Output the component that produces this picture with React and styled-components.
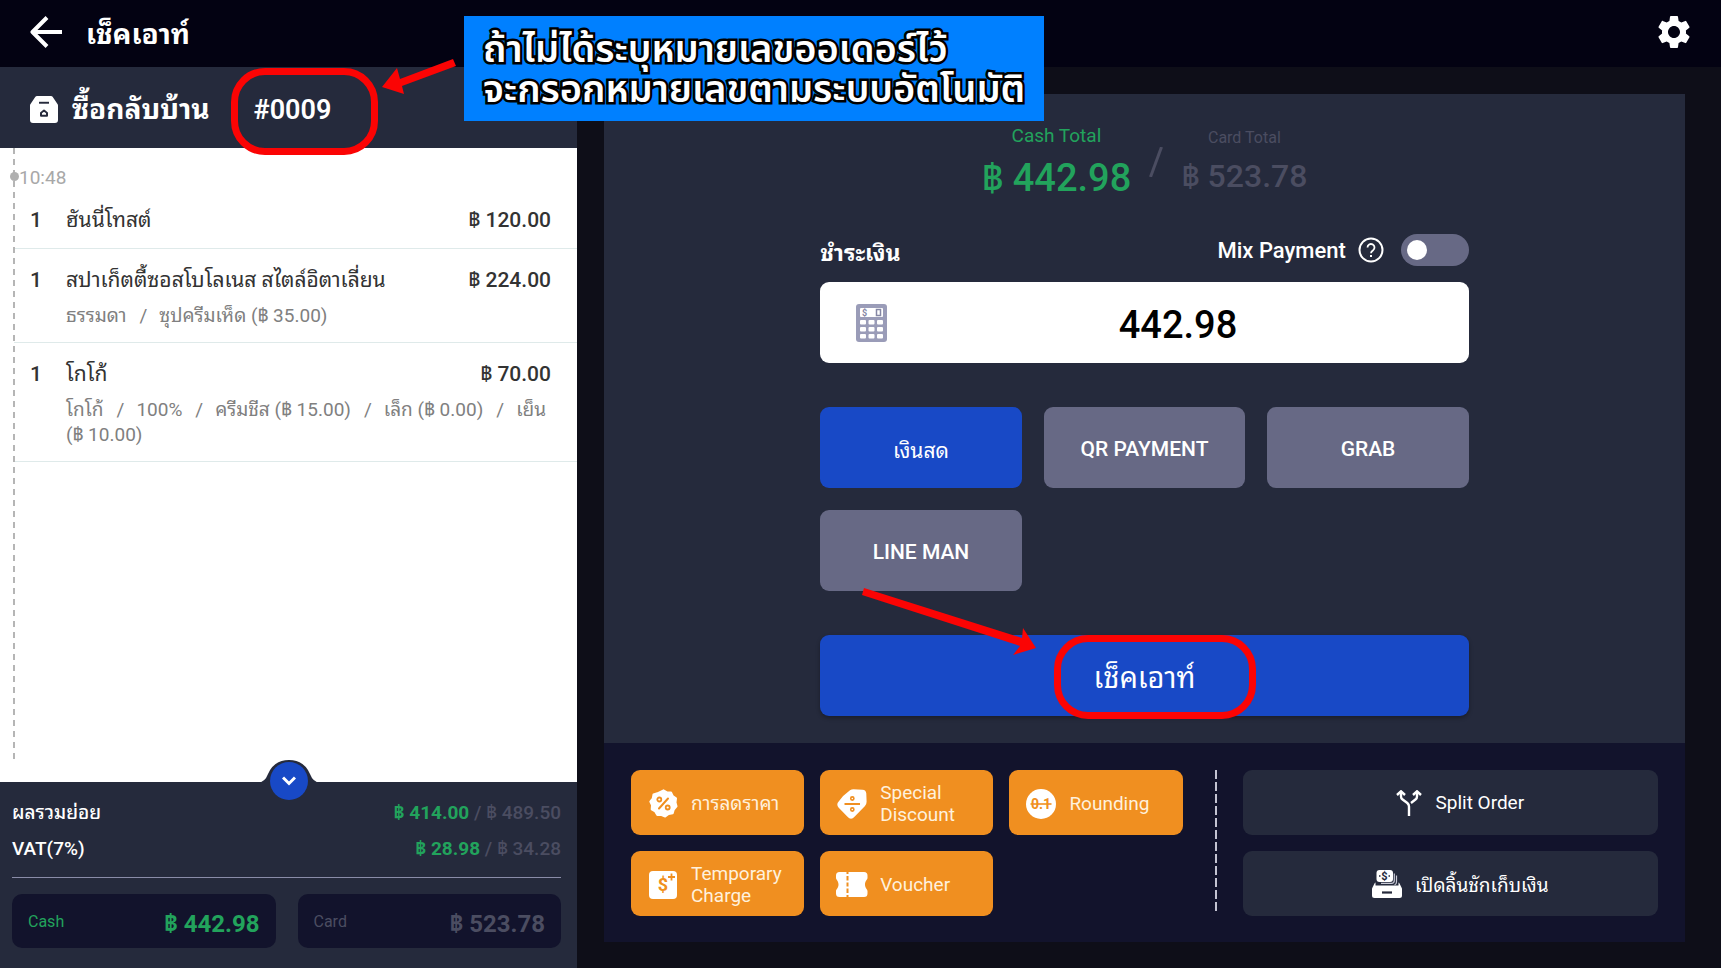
import React, { useState } from 'react';
import styled, { ThemeProvider, createGlobalStyle, css } from 'styled-components';
import { MdSettings } from 'react-icons/md';

const theme = {
  header: '#030212',
  page: '#0e0e18',
  panel: '#252a3c',
  deep: '#12132c',
  blue: '#1849c6',
  grey: '#676985',
  orange: '#f08f20',
  green: '#22a35c',
  muted: '#4b4d61',
  cream: '#fff1dd',
  red: '#fb0404',
};

const GlobalStyle = createGlobalStyle`
  * {
    box-sizing: border-box;
  }

  body {
    margin: 0;
    background: ${(props) => props.theme.page};
    color: #fff;
    font-family: Roboto, 'Noto Sans Thai Looped', 'Droid Sans Thai', Loma, Garuda, Waree, 'Noto Sans Thai', 'Noto Sans', sans-serif;
  }

  button, input {
    font-family: inherit;
  }
`;

const orderItems = [
  { qty: 1, name: 'ฮันนี่โทสต์', price: '฿ 120.00', options: [] },
  {
    qty: 1,
    name: 'สปาเก็ตตี้ซอสโบโลเนส สไตล์อิตาเลี่ยน',
    price: '฿ 224.00',
    options: [{ name: 'ธรรมดา' }, { name: 'ซุปครีมเห็ด', price: '฿ 35.00' }],
  },
  {
    qty: 1,
    name: 'โกโก้',
    price: '฿ 70.00',
    options: [
      { name: 'โกโก้' },
      { name: '100%' },
      { name: 'ครีมชีส', price: '฿ 15.00' },
      { name: 'เล็ก', price: '฿ 0.00' },
      { name: 'เย็น', price: '฿ 10.00' },
    ],
  },
];

const methods = ['เงินสด', 'QR PAYMENT', 'GRAB', 'LINE MAN'];

const BackIcon = () => (
  <svg width="32" height="32" viewBox="0 0 32 32" fill="none" stroke="currentColor" strokeWidth="4">
    <path d="M32 16H3M17 1.500L2.500 16L17 30.500" strokeLinejoin="round" />
  </svg>
);

const TakeawayIcon = () => (
  <svg width="28" height="27" viewBox="0 0 28 28" preserveAspectRatio="none">
    <path fill="#fff" d="M7 0h14a2 2 0 0 1 1.600.8L27.300 8a3 3 0 0 1 .7 2v15a3 3 0 0 1-3 3H3a3 3 0 0 1-3-3V10a3 3 0 0 1 .7-2L5.400.8A2 2 0 0 1 7 0z" />
    <path stroke="#262a3b" strokeWidth="2" d="M9 7h10" />
    <path stroke="#262a3b" strokeWidth="2" fill="none" strokeLinejoin="round" d="M11 20.500v-3l3-2.500 3 2.500v3z" />
  </svg>
);

const HelpIcon = () => (
  <svg width="26" height="26" viewBox="0 0 26 26" fill="none" stroke="currentColor" strokeWidth="2">
    <circle cx="13" cy="13" r="11.500" />
    <path d="M9.500 10.500a3.500 3.500 0 1 1 5.600 2.800c-1.300.9-2.100 1.500-2.100 2.900" strokeWidth="1.800" />
    <path d="M13 18v2" />
  </svg>
);

const CalculatorIcon = () => (
  <svg width="31" height="38" viewBox="0 0 31 38">
    <rect width="31" height="38" rx="3" fill="#9a9cb8" />
    <rect x="4" y="4" width="23" height="9" rx="1" fill="#fff" />
    <text x="6" y="12" fontSize="9" fontWeight="700" fill="#8486a4">$</text>
    <rect x="20.500" y="5.500" width="4" height="6" fill="none" stroke="#8486a4" strokeWidth="1.500" />
    {[16, 23, 30].map((y) => [4, 12.500, 21].map((x) => (
      <rect key={`${x}-${y}`} x={x} y={y} width="6" height="4.500" rx="1" fill="#fff" />
    )))}
  </svg>
);

const PercentIcon = () => (
  <svg width="29" height="29" viewBox="0 0 29 29">
    <path fill="#fff" stroke="#fff" strokeWidth="2" strokeLinejoin="round" d="M14.500 1.300L18 3.300L22 3.500L23.700 7L27 9.300L26.500 13.500L27.500 17.300L24.800 20.500L23.700 24.200L19.600 25L16.200 27.500L12.500 26L8.300 26L6.200 22.500L2.700 20.300L3 16.200L1.300 12.500L3.800 9.300L4.500 5.400L8.400 4.300z" />
    <path d="M19 9.500l-9 10" stroke="#f08f20" strokeWidth="2" strokeLinecap="round" />
    <circle cx="10.300" cy="10.500" r="2" fill="none" stroke="#f08f20" strokeWidth="1.800" />
    <circle cx="18.700" cy="18.500" r="2" fill="none" stroke="#f08f20" strokeWidth="1.800" />
  </svg>
);

const SpecialIcon = () => (
  <svg width="30" height="30" viewBox="0 0 30 30">
    <path fill="#fff" d="M13 1.200Q14.500 0.300 16.500 0.300L25.500 0.700Q29 1 29.300 4.500L29.600 12.500Q29.700 15 28 17L17.500 27.800Q14 31.500 10.500 27.800L1.500 18.500Q-0.900 15.500 1.500 12.800Q6 6 13 1.200z" />
    <g fill="none" stroke="#f08f20">
      <path d="M7.500 15h15.500" strokeWidth="2" />
      <circle cx="15.300" cy="9.500" r="1.600" strokeWidth="1.600" />
      <circle cx="15.300" cy="20.500" r="1.600" strokeWidth="1.600" />
    </g>
  </svg>
);

const RoundingIcon = () => (
  <svg width="30" height="30" viewBox="0 0 30 30">
    <circle cx="15" cy="15" r="15" fill="#fff" />
    <text x="15" y="20" fontSize="14" fontWeight="700" textAnchor="middle" fill="#f08f20">0.1</text>
    <path d="M4.500 15h21" stroke="#f08f20" strokeWidth="1.600" />
  </svg>
);

const ChargeIcon = () => (
  <svg width="28" height="28" viewBox="0 0 28 28">
    <rect width="28" height="28" rx="4" fill="#fff" />
    <text x="14" y="20" fontSize="18" fontWeight="700" textAnchor="middle" fill="#f08f20">$</text>
    <path d="M22.500 2.500v7M19 6h7" stroke="#f08f20" strokeWidth="1.800" />
  </svg>
);

const VoucherIcon = () => (
  <svg width="32" height="25" viewBox="0 0 32 25">
    <path fill="#fff" d="M3.500 0H28a3.500 3.500 0 0 1 3.500 3.500V6c0 1.500-2.500 3-2.500 6.500s2.500 5 2.500 6.500v2.500A3.500 3.500 0 0 1 28 25H3.500A3.500 3.500 0 0 1 0 21.500V19c0-1.500 2.500-3 2.500-6.500S0 7.500 0 6V3.500A3.500 3.500 0 0 1 3.500 0z" />
    <path d="M11.500 0v25" stroke="#f08f20" strokeWidth="2" strokeDasharray="2 2 4.500 2 4 2 4.500 2" />
  </svg>
);

const SplitIcon = () => (
  <svg width="26" height="26" viewBox="0 0 26 26" fill="none" stroke="currentColor" strokeWidth="2.400">
    <path d="M13 26V16.500Q13 14.500 11.300 13L6.300 9.300Q5 8.200 5 6.500V2" />
    <path d="M21 2v4.500Q21 8.200 19.700 9.300L15 13" />
    <path d="M1 5L5 1.300L9 5M17 5L21 1.300L25 5" />
  </svg>
);

const DrawerIcon = () => (
  <svg width="30" height="28" viewBox="0 0 30 28">
    <path d="M22.300 3.500V10.500Q22.300 13.300 19.500 13.300H9M24.500 5.500V12Q24.500 14.500 22.500 15" stroke="#c9cad6" strokeWidth="1.200" fill="none" />
    <rect x="4.500" y="0" width="16.500" height="12" rx="3" fill="#fff" />
    <text x="12.500" y="10" fontSize="11" fontWeight="700" textAnchor="middle" fill="#262a3b">$</text>
    <path d="M7 6h1.500M16.500 6h1.500" stroke="#262a3b" strokeWidth="1.500" />
    <path fill="#fff" d="M3.500 12.500V15.500H26.500V12.500Q27 12.700 27.500 13.500L29.500 17.500Q30 18.200 30 19V25.500a2.500 2.500 0 0 1-2.500 2.500h-25A2.500 2.500 0 0 1 0 25.500V19Q0 18.200.5 17.500L2.500 13.500Q3 12.700 3.500 12.500z" />
    <path d="M10 22.500h10" stroke="#262a3b" strokeWidth="2.200" />
  </svg>
);

const discounts = [
  { label: 'การลดราคา', icon: <PercentIcon /> },
  { label: 'Special Discount', icon: <SpecialIcon /> },
  { label: 'Rounding', icon: <RoundingIcon /> },
  { label: 'Temporary Charge', icon: <ChargeIcon /> },
  { label: 'Voucher', icon: <VoucherIcon /> },
];

const App = () => {
  const [method, setMethod] = useState('เงินสด');
  const [mixPayment, setMixPayment] = useState(false);
  const [amount, setAmount] = useState('442.98');

  return (
    <ThemeProvider theme={theme}>
      <GlobalStyle />
      <Page>
        <Header>
          <IconButton aria-label="Back"><BackIcon /></IconButton>
          <h1>เช็คเอาท์</h1>
          <IconButton aria-label="Settings"><MdSettings size={40} /></IconButton>
        </Header>
        <Columns>
          <Order>
            <OrderHeader>
              <TakeawayIcon />
              <h2>ซื้อกลับบ้าน</h2>
              <OrderNumber>#0009<NumberRing /></OrderNumber>
            </OrderHeader>
            <Receipt>
              <Time>10:48</Time>
              <ItemList>
                {orderItems.map((item) => (
                  <Item key={item.name}>
                    <Qty>{item.qty}</Qty>
                    <span>{item.name}</span>
                    <Price>{item.price}</Price>
                    {item.options.length > 0 && (
                      <Options>
                        {item.options.map((option, i) => (
                          <React.Fragment key={option.name}>
                            {i > 0 && <Slash>/</Slash>}
                            <span>{option.name}</span>
                            {option.price && <> <span>({option.price})</span></>}
                          </React.Fragment>
                        ))}
                      </Options>
                    )}
                  </Item>
                ))}
              </ItemList>
            </Receipt>
            <Summary>
              <Bump width="62" height="23" viewBox="0 0 62 23">
                <path d="M0 23Q7 22 10 14Q16 0 31 0Q46 0 52 14Q55 22 62 23z" />
              </Bump>
              <Collapse aria-label="Collapse">
                <svg width="14" height="10" viewBox="0 0 14 10" fill="none" stroke="#fff" strokeWidth="3">
                  <path d="M1 1.500l6 6 6-6" />
                </svg>
              </Collapse>
              <SummaryRow>
                <span>ผลรวมย่อย</span>
                <span><b>฿ 414.00</b> / <i>฿ 489.50</i></span>
              </SummaryRow>
              <SummaryRow>
                <span>VAT(7%)</span>
                <span><b>฿ 28.98</b> / <i>฿ 34.28</i></span>
              </SummaryRow>
              <Boxes>
                <TotalBox $active>Cash <strong>฿ 442.98</strong></TotalBox>
                <TotalBox>Card <strong>฿ 523.78</strong></TotalBox>
              </Boxes>
            </Summary>
          </Order>

          <Main>
            <Payment>
              <Totals>
                <Total $active>
                  <span>Cash Total</span>
                  <strong>฿ 442.98</strong>
                </Total>
                <svg width="14" height="30" viewBox="0 0 14 30" stroke={theme.muted} strokeWidth="3">
                  <path d="M12.500 0L1.500 30" />
                </svg>
                <Total>
                  <span>Card Total</span>
                  <strong>฿ 523.78</strong>
                </Total>
              </Totals>
              <PayHeader>
                <label htmlFor="amount">ชำระเงิน</label>
                <MixLabel>
                  Mix Payment
                  <HelpIcon />
                  <Switch
                    type="checkbox"
                    role="switch"
                    checked={mixPayment}
                    onChange={() => setMixPayment(!mixPayment)}
                  />
                </MixLabel>
              </PayHeader>
              <AmountBox>
                <CalculatorIcon />
                <input id="amount" value={amount} onChange={(e) => setAmount(e.target.value)} />
              </AmountBox>
              <Methods>
                {methods.map((name) => (
                  <MethodButton key={name} $active={name === method} onClick={() => setMethod(name)}>
                    {name}
                  </MethodButton>
                ))}
              </Methods>
              <CheckoutButton>
                เช็คเอาท์
                <CheckoutRing />
                <CheckoutArrow width="174" height="70" viewBox="0 0 174 70">
                  <path d="M2 0L160 50L161 40L174 60L151 67L158 58L0 7z" />
                </CheckoutArrow>
              </CheckoutButton>
            </Payment>
            <Tools>
              <Discounts>
                {discounts.map((d) => (
                  <DiscountButton key={d.label}>
                    <IconSlot>{d.icon}</IconSlot>
                    <span>{d.label}</span>
                  </DiscountButton>
                ))}
              </Discounts>
              <Divider />
              <Actions>
                <ActionButton><SplitIcon />Split Order</ActionButton>
                <ActionButton><DrawerIcon />เปิดลิ้นชักเก็บเงิน</ActionButton>
              </Actions>
            </Tools>
          </Main>
        </Columns>

        <NumberArrow width="74" height="36" viewBox="0 0 74 36">
          <path d="M71 0L18 20L15 9L0 28L22 35L20 27L74 7z" />
        </NumberArrow>
        <Callout>
          ถ้าไม่ได้ระบุหมายเลขออเดอร์ไว้
          <br />
          จะกรอกหมายเลขตามระบบอัตโนมัติ
        </Callout>
      </Page>
    </ThemeProvider>
  );
};

const Page = styled.div`
  position: relative;
  display: flex;
  flex-direction: column;
  min-height: 100vh;
`;

const Header = styled.header`
  display: flex;
  align-items: center;
  gap: 24px;
  height: 67px;
  padding: 0 27px 3px 30px;
  background: ${(props) => props.theme.header};

  h1 {
    flex: 1;
    margin: 0;
    padding-bottom: 2px;
    font-size: 28px;
    font-weight: 700;
  }
`;

const IconButton = styled.button`
  display: flex;
  padding: 0;
  border: none;
  background: none;
  color: #fff;
  cursor: pointer;
`;

const Columns = styled.div`
  flex: 1;
  display: grid;
  grid-template-columns: minmax(0, 577fr) minmax(0, 1144fr);
`;

const Order = styled.aside`
  display: flex;
  flex-direction: column;
`;

const OrderHeader = styled.div`
  display: flex;
  align-items: center;
  height: 81px;
  padding: 4px 30px 0;
  background: ${(props) => props.theme.panel};

  h2 {
    margin: 0 44px 0 14px;
    padding-bottom: 6px;
    font-size: 28px;
    font-weight: 700;
  }
`;

const OrderNumber = styled.span`
  position: relative;
  z-index: 1;
  font-size: 27px;
  font-weight: 600;
  line-height: 30px;
`;

const ring = css`
  position: absolute;
  border: 7px solid ${(props) => props.theme.red};
  border-radius: 34px;
  pointer-events: none;
`;

const NumberRing = styled.span`
  ${ring}
  inset: -27px -47px -30px -23px;
`;

const Receipt = styled.div`
  position: relative;
  flex: 1;
  padding-left: 14px;
  background: #fff;
  color: #333;

  &::before {
    content: '';
    position: absolute;
    top: 0;
    bottom: 22px;
    left: 13px;
    width: 2px;
    background: repeating-linear-gradient(#b5b5b5 0 6px, transparent 6px 11px);
  }
`;

const Time = styled.div`
  position: relative;
  height: 46px;
  padding: 18px 0 0 5px;
  color: #a8a8a8;
  font-size: 19px;
  line-height: 24px;

  &::before {
    content: '';
    position: absolute;
    top: 24px;
    left: -4px;
    width: 9px;
    height: 9px;
    border-radius: 50%;
    background: #b0b0b0;
  }
`;

const ItemList = styled.ul`
  margin: 0;
  padding: 0;
  list-style: none;
`;

const Item = styled.li`
  display: grid;
  grid-template-columns: 36px 1fr auto;
  padding: 12px 26px 14px 16px;
  border-bottom: 1px solid #dfeaea;
  font-size: 21px;
  line-height: 28px;

  & + & {
    padding-top: 17px;
  }
`;

const Qty = styled.span`
  font-weight: 500;
`;

const Price = styled.span`
  font-weight: 500;
`;

const Options = styled.div`
  grid-column: 2 / -1;
  padding-top: 9px;
  color: #808080;
  font-size: 19px;
  line-height: 25px;
`;

const Slash = styled.span`
  margin: 0 12px 0 13px;
`;

const Summary = styled.section`
  position: relative;
  padding: 13px 16px 20px 12px;
  background: ${(props) => props.theme.panel};
`;

const Bump = styled.svg`
  position: absolute;
  top: -22px;
  left: 50%;
  transform: translateX(-50%);
  fill: ${(props) => props.theme.panel};
`;

const Collapse = styled.button`
  position: absolute;
  top: -20px;
  left: 50%;
  display: flex;
  align-items: center;
  justify-content: center;
  width: 38px;
  height: 38px;
  padding: 0;
  transform: translateX(-50%);
  border: none;
  border-radius: 50%;
  background: ${(props) => props.theme.blue};
  cursor: pointer;
`;

const SummaryRow = styled.div`
  display: flex;
  justify-content: space-between;
  font-size: 19px;
  font-weight: 500;
  line-height: 36px;
  color: #fff;

  span + span {
    color: ${(props) => props.theme.muted};
  }

  b {
    font-weight: 700;
    color: ${(props) => props.theme.green};
  }

  i {
    font-style: normal;
  }
`;

const Boxes = styled.div`
  display: grid;
  grid-template-columns: 1fr 1fr;
  gap: 22px;
  margin-top: 10px;
  padding-top: 16px;
  border-top: 1px solid #8a8ca8;
`;

const TotalBox = styled.div`
  display: flex;
  align-items: center;
  justify-content: space-between;
  height: 54px;
  padding: 0 16px;
  border-radius: 10px;
  background: ${(props) => props.theme.deep};
  color: ${(props) => (props.$active ? props.theme.green : props.theme.muted)};
  font-size: 16px;

  strong {
    font-size: 24px;
    font-weight: 700;
  }
`;

const Main = styled.main`
  display: flex;
  flex-direction: column;
  padding: 27px 36px 26px 27px;
`;

const Payment = styled.section`
  flex: 1;
  padding: 28px 20% 27px;
  background: ${(props) => props.theme.panel};
`;

const Totals = styled.div`
  display: flex;
  align-items: center;
  justify-content: center;
  gap: 18px;
  height: 80px;
`;

const Total = styled.div`
  display: flex;
  flex-direction: column;
  align-items: center;
  gap: ${(props) => (props.$active ? '9px' : '5px')};
  color: ${(props) => (props.$active ? props.theme.green : props.theme.muted)};
  font-size: ${(props) => (props.$active ? '19px' : '16px')};
  line-height: 22px;

  strong {
    font-size: ${(props) => (props.$active ? '38px' : '32px')};
    font-weight: 500;
    line-height: 44px;
  }
`;

const PayHeader = styled.div`
  display: flex;
  align-items: center;
  justify-content: space-between;
  height: 32px;
  margin-top: 32px;
  font-size: 23px;
  font-weight: 700;
`;

const MixLabel = styled.label`
  display: flex;
  align-items: center;
  gap: 12px;
  font-size: 22px;
  font-weight: 500;
`;

const Switch = styled.input`
  appearance: none;
  width: 68px;
  height: 32px;
  margin: 0 0 0 5px;
  padding: 6px;
  border-radius: 16px;
  background: ${(props) => props.theme.grey};
  cursor: pointer;

  &::before {
    content: '';
    display: block;
    width: 20px;
    height: 20px;
    border-radius: 50%;
    background: #fff;
  }

  &:checked {
    padding-left: 42px;
    background: ${(props) => props.theme.blue};
  }
`;

const AmountBox = styled.div`
  display: flex;
  align-items: center;
  height: 81px;
  margin-top: 16px;
  padding-left: 36px;
  border-radius: 9px;
  background: #fff;

  input {
    flex: 1;
    min-width: 0;
    padding: 4px 0 0;
    border: none;
    outline: none;
    background: none;
    color: #000;
    font-size: 38px;
    font-weight: 500;
    text-align: center;
  }
`;

const Methods = styled.div`
  display: grid;
  grid-template-columns: repeat(3, 1fr);
  gap: 22px;
  margin: 44px 0;
`;

const MethodButton = styled.button`
  height: 81px;
  padding: 2px 0 0;
  border: none;
  border-radius: 9px;
  background: ${(props) => (props.$active ? props.theme.blue : props.theme.grey)};
  color: #fff;
  font-size: 21px;
  font-weight: ${(props) => (props.$active ? 400 : 500)};
  cursor: pointer;
`;

const CheckoutButton = styled.button`
  position: relative;
  width: 100%;
  height: 81px;
  padding: 0 0 2px;
  border: none;
  border-radius: 9px;
  background: ${(props) => props.theme.blue};
  box-shadow: 0 2px 4px rgba(0, 0, 0, 0.3);
  color: #fff;
  font-size: 29px;
  cursor: pointer;
`;

const CheckoutRing = styled.span`
  ${ring}
  top: 0;
  left: calc(50% - 91px);
  width: 202px;
  height: 84px;
`;

const CheckoutArrow = styled.svg`
  position: absolute;
  top: -47px;
  left: calc(50% - 283px);
  fill: ${(props) => props.theme.red};
  pointer-events: none;
`;

const Tools = styled.section`
  display: flex;
  padding: 27px 27px 26px;
  background: ${(props) => props.theme.deep};
`;

const Discounts = styled.div`
  flex: 551 1 0;
  display: grid;
  grid-template-columns: repeat(3, 1fr);
  gap: 16px;
`;

const DiscountButton = styled.button`
  display: flex;
  align-items: center;
  gap: 12px;
  height: 65px;
  padding: 2px 10px 0 16px;
  border: none;
  border-radius: 9px;
  background: ${(props) => props.theme.orange};
  color: ${(props) => props.theme.cream};
  font-size: 19px;
  line-height: 22px;
  text-align: left;
  cursor: pointer;
`;

const IconSlot = styled.span`
  display: flex;
  flex: none;
  justify-content: center;
  width: 32px;
`;

const Divider = styled.div`
  width: 2px;
  margin: 0 26px 2px 32px;
  background: repeating-linear-gradient(#c3c3d2 0 9px, transparent 9px 12px);
`;

const Actions = styled.div`
  flex: 415 1 0;
  display: grid;
  gap: 16px;
`;

const ActionButton = styled.button`
  display: flex;
  align-items: center;
  justify-content: center;
  gap: 13px;
  height: 65px;
  padding: 0 0 0 20px;
  border: none;
  border-radius: 9px;
  background: ${(props) => props.theme.panel};
  color: #fff;
  font-size: 19px;
  cursor: pointer;
`;

const NumberArrow = styled.svg`
  position: absolute;
  top: 59px;
  left: 382px;
  fill: ${(props) => props.theme.red};
`;

const Callout = styled.div`
  position: absolute;
  top: 16px;
  left: 464px;
  z-index: 2;
  width: 580px;
  height: 105px;
  padding: 15px 19px 0;
  background: #0080ff;
  font-family: 'Noto Sans Thai', 'Noto Sans', sans-serif;
  font-size: 38px;
  font-weight: 600;
  line-height: 40px;
  white-space: nowrap;
  -webkit-text-stroke: 5px #000;
  paint-order: stroke fill;
`;

export default App;
